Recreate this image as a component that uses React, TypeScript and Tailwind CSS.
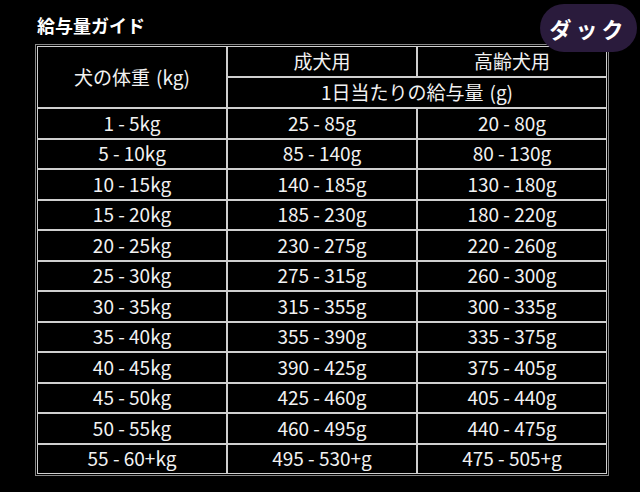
const rows: [string, string, string][] = [
  ["1 - 5kg", "25 - 85g", "20 - 80g"],
  ["5 - 10kg", "85 - 140g", "80 - 130g"],
  ["10 - 15kg", "140 - 185g", "130 - 180g"],
  ["15 - 20kg", "185 - 230g", "180 - 220g"],
  ["20 - 25kg", "230 - 275g", "220 - 260g"],
  ["25 - 30kg", "275 - 315g", "260 - 300g"],
  ["30 - 35kg", "315 - 355g", "300 - 335g"],
  ["35 - 40kg", "355 - 390g", "335 - 375g"],
  ["40 - 45kg", "390 - 425g", "375 - 405g"],
  ["45 - 50kg", "425 - 460g", "405 - 440g"],
  ["50 - 55kg", "460 - 495g", "440 - 475g"],
  ["55 - 60+kg", "495 - 530+g", "475 - 505+g"],
];

const cell = "border border-[#cfcfcf] text-center align-middle px-0 pt-0 pb-[2px]";

const App = () => {
  return (
    <div
      className="relative h-[492px] w-[640px] overflow-hidden bg-black text-[#f2f2f2]"
      style={{ fontFamily: '"Noto Sans CJK JP", "Noto Sans", sans-serif' }}
    >
      <div className="absolute right-[3px] top-[4px] flex h-[48px] w-[97px] items-center justify-center rounded-[24px] bg-[#2a1b3c]">
        <span className="text-[22px] font-bold tracking-[4px] text-white">ダック</span>
      </div>

      <div className="pl-[37px] pt-[13px]">
        <h1 className="text-[18px] font-bold leading-[24px] text-white">給与量ガイド</h1>
      </div>

      <div className="ml-[35px] mt-[7px] w-[574px] border border-[#8a8a8a] p-[1px]">
        <table className="w-full table-fixed border-separate border-spacing-0 text-[19px] leading-none">
          <tbody>
            <tr className="h-[31px]">
              <td rowSpan={2} className={cell}>
                犬の体重<span className="ml-[6px]">(kg)</span>
              </td>
              <td className={cell}>成犬用</td>
              <td className={cell}>高齢犬用</td>
            </tr>
            <tr className="h-[31px]">
              <td colSpan={2} className={cell}>
                1日当たりの給与量<span className="ml-[6px]">(g)</span>
              </td>
            </tr>
            {rows.map((r) => (
              <tr key={r[0]} className="h-[30.5px]">
                <td className={cell}>{r[0]}</td>
                <td className={cell}>{r[1]}</td>
                <td className={cell}>{r[2]}</td>
              </tr>
            ))}
          </tbody>
        </table>
      </div>
    </div>
  );
};

export default App;
